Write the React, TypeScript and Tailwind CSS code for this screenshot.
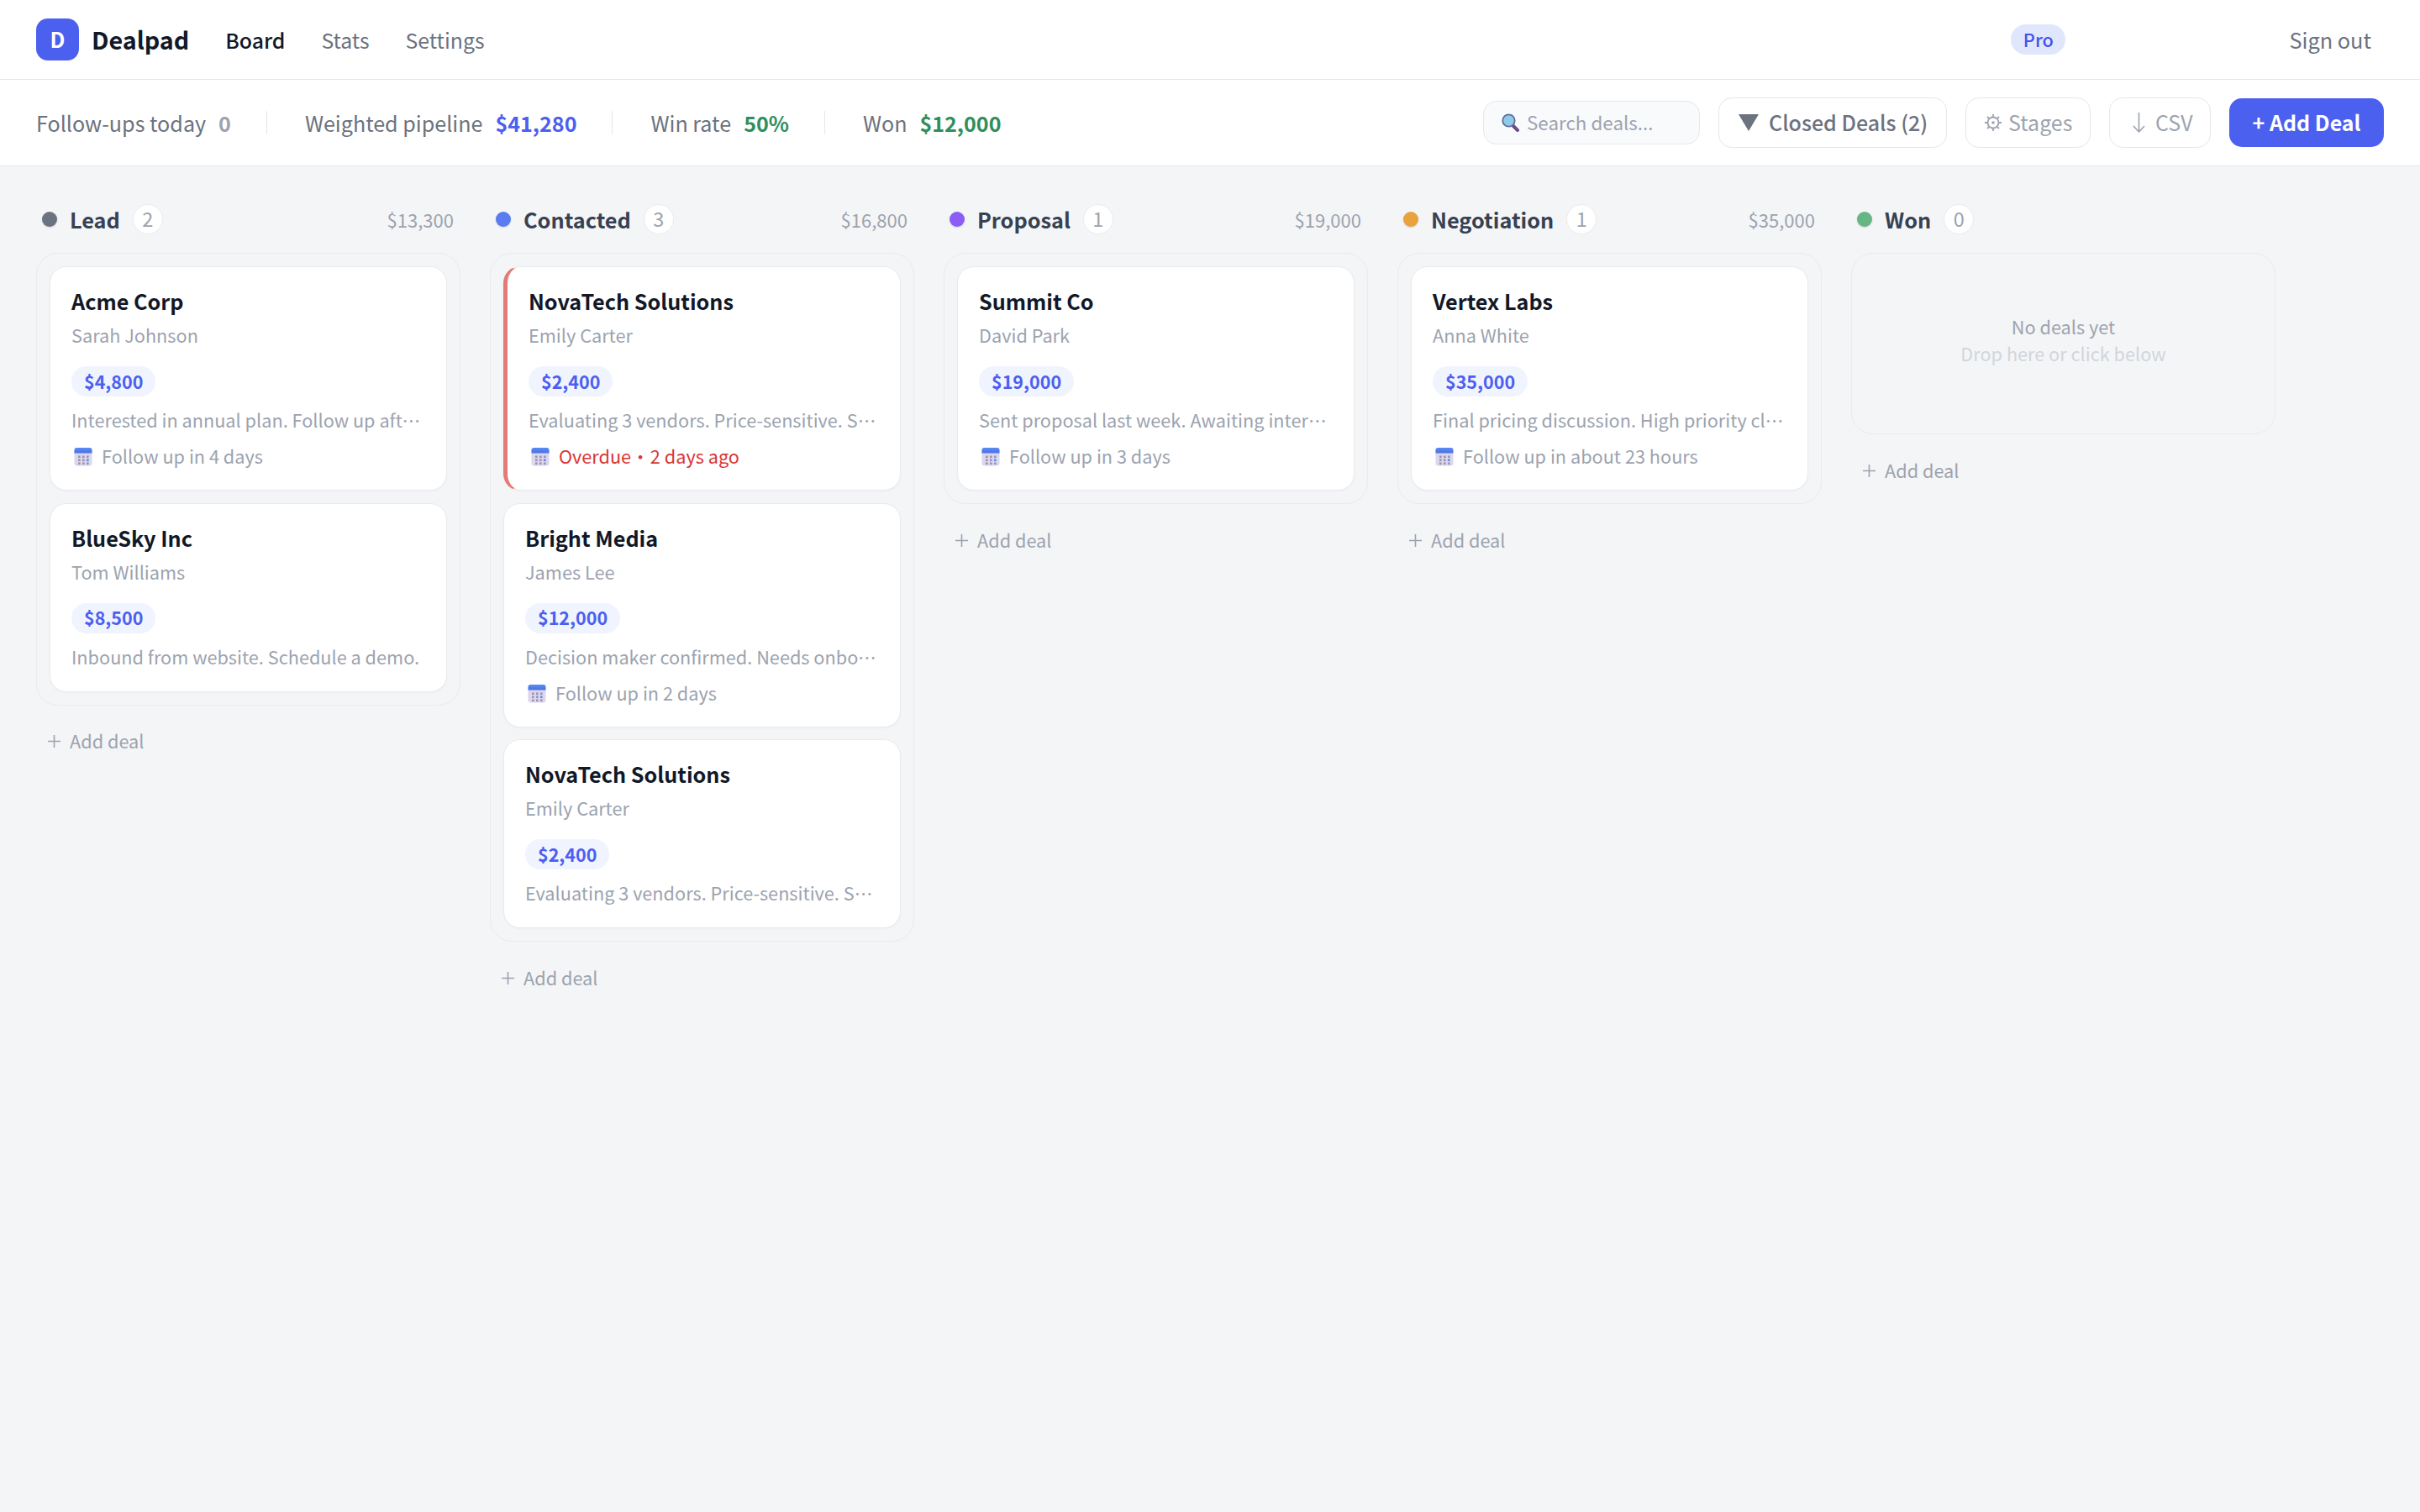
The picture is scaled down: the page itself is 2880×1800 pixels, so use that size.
import React from "react";

type Deal = {
  company: string;
  contact: string;
  amount: string;
  note: string;
  follow?: string;
  overdue?: boolean;
};

type Column = {
  name: string;
  dot: string;
  count: number;
  total: string;
  deals: Deal[];
};

const columns: Column[] = [
  {
    name: "Lead",
    dot: "bg-[#6b7280]",
    count: 2,
    total: "$13,300",
    deals: [
      { company: "Acme Corp", contact: "Sarah Johnson", amount: "$4,800", note: "Interested in annual plan. Follow up after the holidays with pricing.", follow: "Follow up in 4 days" },
      { company: "BlueSky Inc", contact: "Tom Williams", amount: "$8,500", note: "Inbound from website. Schedule a demo." },
    ],
  },
  {
    name: "Contacted",
    dot: "bg-[#5b7cf0]",
    count: 3,
    total: "$16,800",
    deals: [
      { company: "NovaTech Solutions", contact: "Emily Carter", amount: "$2,400", note: "Evaluating 3 vendors. Price-sensitive. Send comparison sheet.", follow: "Overdue", overdue: true },
      { company: "Bright Media", contact: "James Lee", amount: "$12,000", note: "Decision maker confirmed. Needs onboarding plan soon.", follow: "Follow up in 2 days" },
      { company: "NovaTech Solutions", contact: "Emily Carter", amount: "$2,400", note: "Evaluating 3 vendors. Price-sensitive. Send comparison sheet." },
    ],
  },
  {
    name: "Proposal",
    dot: "bg-[#8b5cf6]",
    count: 1,
    total: "$19,000",
    deals: [
      { company: "Summit Co", contact: "David Park", amount: "$19,000", note: "Sent proposal last week. Awaiting internal review.", follow: "Follow up in 3 days" },
    ],
  },
  {
    name: "Negotiation",
    dot: "bg-[#e8a33d]",
    count: 1,
    total: "$35,000",
    deals: [
      { company: "Vertex Labs", contact: "Anna White", amount: "$35,000", note: "Final pricing discussion. High priority close this month.", follow: "Follow up in about 23 hours" },
    ],
  },
  { name: "Won", dot: "bg-[#66b685]", count: 0, total: "", deals: [] },
];

const CalendarIcon = () => (
  <svg viewBox="0 0 22 23" className="h-[23px] w-[22px] shrink-0">
    <defs>
      <linearGradient id="calTop" x1="0" y1="0" x2="0" y2="1">
        <stop offset="0" stopColor="#5b8df0" />
        <stop offset="1" stopColor="#4a6fe8" />
      </linearGradient>
    </defs>
    <rect x="0.5" y="1" width="21" height="21.5" rx="3" fill="#dcd6ee" />
    <path d="M0.5 7.5V4a3 3 0 0 1 3-3h15a3 3 0 0 1 3 3v3.5z" fill="url(#calTop)" />
    {[5, 10, 15].map((x) =>
      [10.5, 14.5, 18.5].map((y) => (
        <rect key={`${x}-${y}`} x={x} y={y} width="2.6" height="2.6" fill={x === 15 && y === 14.5 ? "#5b8df0" : "#9a94ae"} />
      ))
    )}
  </svg>
);

const SearchIcon = () => (
  <svg viewBox="0 0 22 22" className="h-[22px] w-[22px] shrink-0">
    <path d="M14 15l5 5" stroke="#6d4a86" strokeWidth="4" strokeLinecap="round" />
    <circle cx="8.5" cy="8.5" r="7.2" fill="#8fcbe8" stroke="#5d6f9a" strokeWidth="1.8" />
  </svg>
);

const DealCard = ({ deal }: { deal: Deal }) => (
  <div
    className={`rounded-[20px] border border-[#e9ebee] bg-white pb-[24px] pr-[24px] pt-[20px] shadow-[0_1px_3px_rgba(0,0,0,0.03)] ${
      deal.overdue ? "border-l-[5px] border-l-[#e27a75] pl-[25px]" : "pl-[25px]"
    }`}
  >
    <div className="text-[25.2px] font-semibold leading-[40px] text-[#111827]">{deal.company}</div>
    <div className="mt-[4px] text-[21.7px] leading-[34px] text-[#9ca3af]">{deal.contact}</div>
    <div className="mt-[20px] flex">
      <span className="flex h-[36px] items-center rounded-full bg-[#f0f4ff] px-[15px] text-[21.5px] font-semibold text-[#4c5ff0]">
        {deal.amount}
      </span>
    </div>
    <div className="mt-[11px] truncate text-[21.7px] leading-[34px] text-[#9ca3af]">{deal.note}</div>
    {deal.follow && (
      <div className={`mt-[11px] flex h-[31px] items-center gap-[11px] pl-[3px] text-[21.7px] ${deal.overdue ? "text-[#d93636]" : "text-[#9ca3af]"}`}>
        <CalendarIcon />
        <span>
          {deal.follow}
          {deal.overdue && <span>·</span>}
          {deal.overdue && <span className="ml-[1px]">2 days ago</span>}
        </span>
      </div>
    )}
  </div>
);

const BoardColumn = ({ column }: { column: Column }) => (
  <div className="w-[505px] shrink-0">
    <div className="flex h-[36px] items-center justify-between pl-[7px] pr-[8px]">
      <div className="flex items-center">
        <span className={`h-[18px] w-[18px] shrink-0 rounded-full shadow-[0_1px_2px_rgba(0,0,0,0.15)] ${column.dot}`} />
        <span className="ml-[15px] pt-[2px] text-[25.3px] font-semibold text-[#374151]">{column.name}</span>
        <span className="ml-[15px] flex h-[36px] w-[36px] shrink-0 items-center justify-center rounded-full border border-[#e9ebee] bg-white text-[23.5px] text-[#9ca3af]">
          {column.count}
        </span>
      </div>
      <span className="text-[22px] text-[#9ca3af]">{column.total}</span>
    </div>
    {column.deals.length > 0 ? (
      <div className="mt-[22px] flex flex-col gap-[14.5px] rounded-[26px] border border-[#e9ebee] p-[15px]">
        {column.deals.map((deal, i) => (
          <DealCard key={i} deal={deal} />
        ))}
      </div>
    ) : (
      <div className="mt-[22px] flex h-[216px] flex-col items-center justify-center rounded-[26px] border border-[#e9ebee] pb-[9px] text-[21.7px] leading-[32px]">
        <div className="text-[#9ca3af]">No deals yet</div>
        <div className="text-[#d1d5db]">Drop here or click below</div>
      </div>
    )}
    <div className="mt-[26px] flex h-[34px] items-center gap-[11px] pl-[14px] text-[21.7px] text-[#9ca3af]">
      <svg viewBox="0 0 15 15" className="h-[15px] w-[15px]">
        <path d="M7.5 0v15M0 7.5h15" stroke="#9ca3af" strokeWidth="1.6" />
      </svg>
      <span>Add deal</span>
    </div>
  </div>
);

const Stat = ({ label, value, valueClass }: { label: string; value: string; valueClass: string }) => (
  <div className="flex items-center gap-[15px] pt-[2px] text-[25.1px] text-[#6b7280]">
    <span>{label}</span>
    <span className={`font-semibold ${valueClass}`}>{value}</span>
  </div>
);

const Divider = () => <div className="ml-[42px] mr-[45px] h-[28px] w-px bg-[#e5e7eb]" />;

const App = () => {
  return (
    <div className="min-h-[1800px] bg-[#f4f5f7] font-['Noto_Sans_CJK_SC',sans-serif]">
      <header className="flex h-[95px] items-center justify-between border-b border-[#e5e7eb] bg-white px-[43px]">
        <div className="flex items-center">
          <div className="flex h-[50px] w-[51px] items-center justify-center rounded-[14px] bg-[#4c60f0] text-[25px] font-bold text-white">D</div>
          <span className="ml-[15px] text-[28.7px] font-semibold text-[#111827]">Dealpad</span>
          <nav className="ml-[43px] flex gap-[43px] pt-[1px] text-[24.8px] text-[#6b7280]">
            <span className="font-medium text-[#111827]">Board</span>
            <span>Stats</span>
            <span>Settings</span>
          </nav>
        </div>
        <div className="flex items-center">
          <span className="flex h-[36px] w-[65px] items-center justify-center rounded-full bg-[#e0e7fd] text-[21.7px] font-medium text-[#4353e8]">Pro</span>
          <span className="ml-[266px] mr-[15px] pt-[1px] text-[25.3px] text-[#6b7280]">Sign out</span>
        </div>
      </header>

      <div className="flex h-[103px] items-center justify-between border-b border-[#e5e7eb] bg-white px-[43px]">
        <div className="flex items-center">
          <Stat label="Follow-ups today" value="0" valueClass="text-[#9ca3af]" />
          <Divider />
          <Stat label="Weighted pipeline" value="$41,280" valueClass="text-[#4c5ff0]" />
          <Divider />
          <Stat label="Win rate" value="50%" valueClass="text-[#2f8f5b]" />
          <Divider />
          <Stat label="Won" value="$12,000" valueClass="text-[#2f8f5b]" />
        </div>
        <div className="flex items-center gap-[22px]">
          <div className="flex h-[52px] w-[258px] items-center gap-[8px] rounded-[16px] border border-[#e5e7eb] bg-[#f9fafb] pl-[21px] text-[22.4px] text-[#9ca3af]">
            <SearchIcon />
            <span>Search deals...</span>
          </div>
          <button className="flex h-[60px] w-[272px] items-center gap-[12px] rounded-[16px] border border-[#e5e7eb] bg-white pl-[23px] text-[25px] font-medium text-[#6b7280]">
            <svg viewBox="0 0 24 20" className="h-[20px] w-[24px]">
              <path d="M0 0h24L12 20z" fill="#6b7280" />
            </svg>
            <span>Closed Deals (2)</span>
          </button>
          <button className="flex h-[60px] w-[149px] items-center gap-[8px] rounded-[16px] border border-[#e5e7eb] bg-white pl-[22px] text-[25px] text-[#9ca3af]">
            <svg viewBox="0 0 20 20" className="h-[20px] w-[20px]">
              <circle cx="10" cy="10" r="6.5" fill="none" stroke="#9ca3af" strokeWidth="1.8" />
              <circle cx="10" cy="10" r="1.8" fill="#9ca3af" />
              <path d="M10 0v3M10 17v3M0 10h3M17 10h3M3 3l2 2M15 15l2 2M17 3l-2 2M5 15l-2 2" stroke="#9ca3af" strokeWidth="1.8" />
            </svg>
            <span>Stages</span>
          </button>
          <button className="flex h-[60px] w-[121px] items-center gap-[11px] rounded-[16px] border border-[#e5e7eb] bg-white pl-[26px] text-[25px] text-[#9ca3af]">
            <svg viewBox="0 0 17 24" className="h-[24px] w-[17px]">
              <path d="M8.5 0v23M2 16l6.5 7 6.5-7" fill="none" stroke="#9ca3af" strokeWidth="1.6" />
            </svg>
            <span>CSV</span>
          </button>
          <button className="flex h-[58px] w-[184px] items-center justify-center rounded-[15px] bg-[#4c60f0] text-[25px] font-semibold text-white">+ Add Deal</button>
        </div>
      </div>

      <main className="flex items-start gap-[35px] px-[43px] pt-[45px]">
        {columns.map((column) => (
          <BoardColumn key={column.name} column={column} />
        ))}
      </main>
    </div>
  );
};

export default App;
